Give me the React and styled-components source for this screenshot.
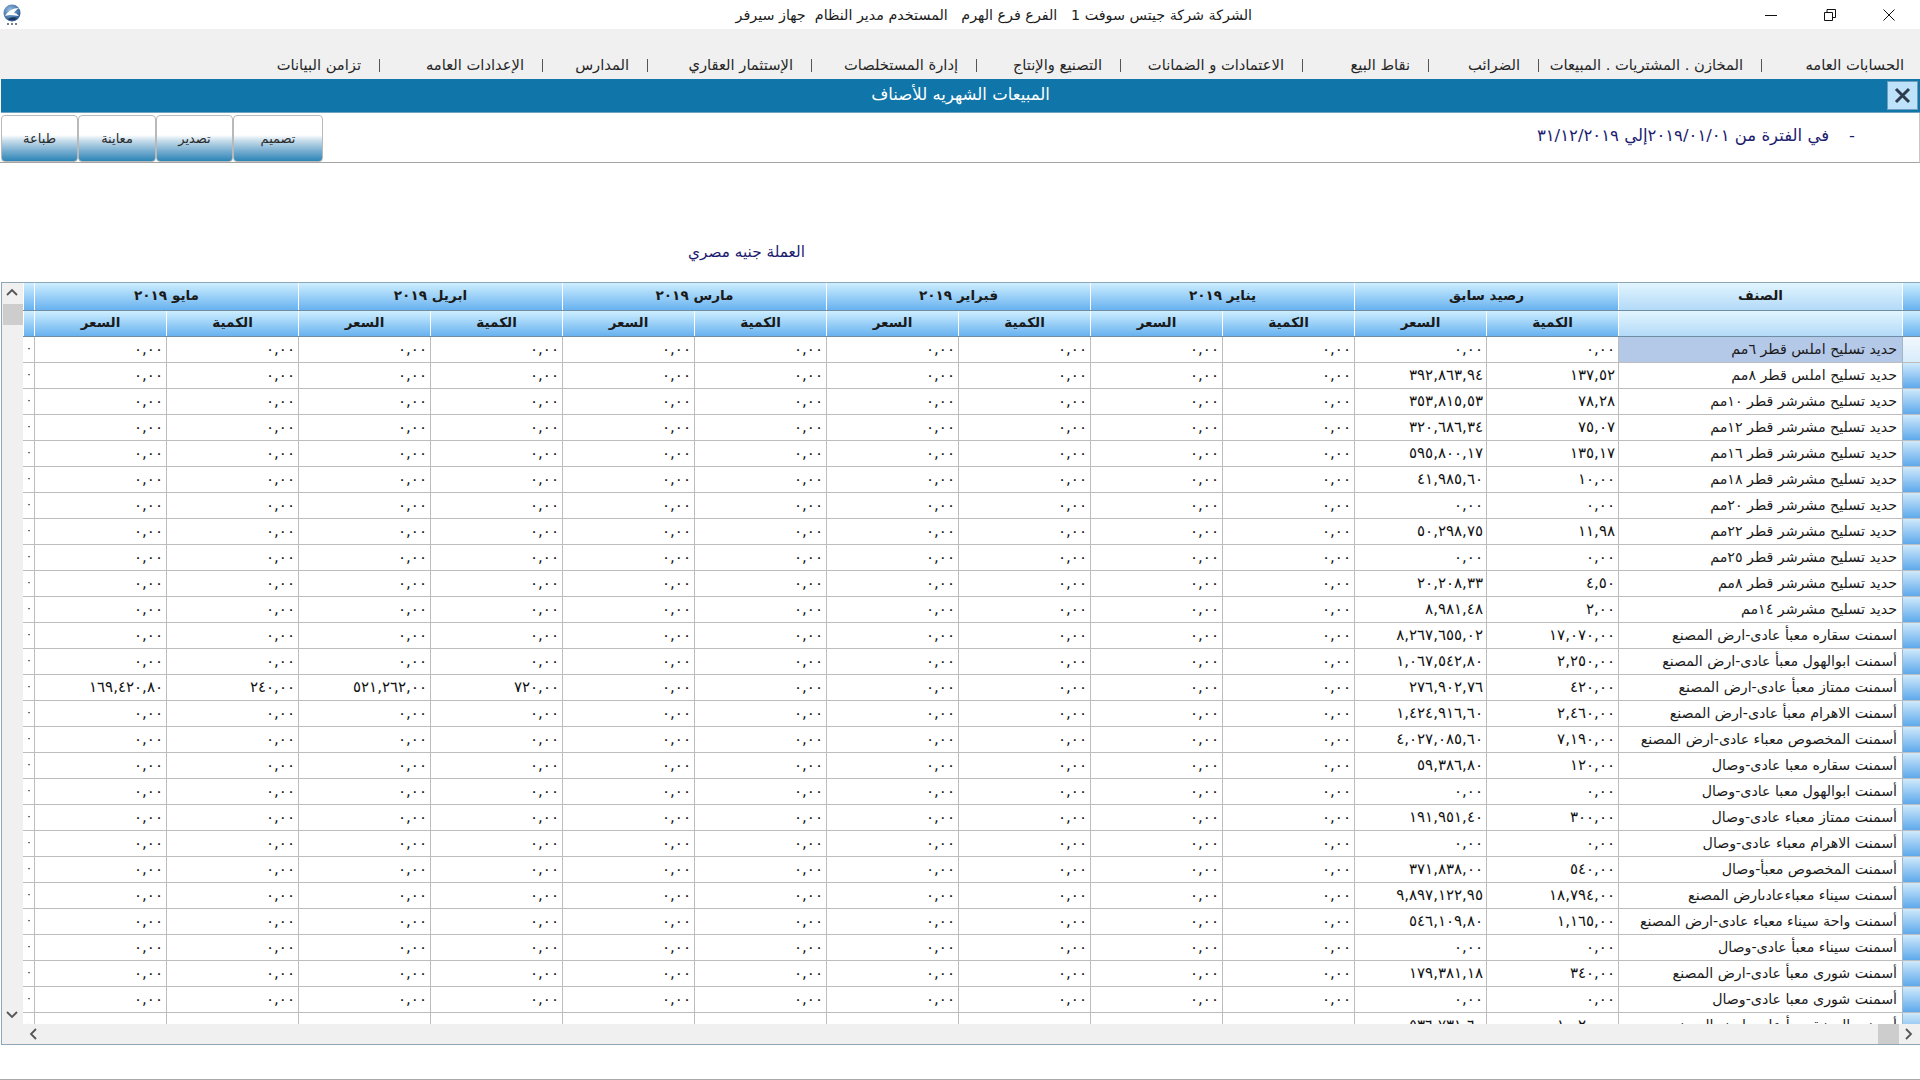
import React from 'react';
import styled, { createGlobalStyle } from 'styled-components';

const Global = createGlobalStyle`
  html, body { margin: 0; padding: 0; background: #fff; }
  * { box-sizing: border-box; }
  body { font-family: "DejaVu Sans", sans-serif; overflow: hidden; }
`;

const Page = styled.div`
  width: 1920px; height: 1080px; display: flex; flex-direction: column; overflow: hidden; background: #fff; color: #222;
`;
const TitleBar = styled.header`
  height: 29px; display: flex; align-items: center; background: #fff; flex: none;
`;
const Logo = styled.svg`
  width: 20px; height: 22px; margin: 0 0 0 2px; flex: none;
`;
const TitleText = styled.div`
  width: 1230px; text-align: right; font-size: 14.3px; color: #1c1c1c; white-space: pre; direction: rtl;
`;
const Controls = styled.div`
  margin-left: auto; margin-right: 2px; display: flex;
`;
const ControlButton = styled.button`
  width: 59px; height: 29px; border: 0; padding: 0; background: transparent; display: flex; align-items: center; justify-content: center; color: #111;
`;
const MenuBar = styled.nav`
  height: 50px; flex: none; background: #f0f0f0; display: flex; direction: rtl; align-items: flex-end; padding: 0 16px 3px 0;
`;
const MenuItem = styled.div`
  width: ${p => p.$w}px; flex: none; display: flex; justify-content: space-between; align-items: center; padding-left: 18px; font-size: 14.7px; line-height: 22px; color: #262626; white-space: nowrap;
`;
const MenuSep = styled.span`
  width: 1px; height: 13px; background: #555; flex: none;
`;
const ReportBar = styled.div`
  height: 34px; flex: none; margin-left: 1px; background: #1076a9; border-bottom: 1px solid #6fa4bf; display: flex; align-items: center; position: relative; justify-content: center; color: #fff; font-size: 16.5px; direction: rtl; padding-bottom: 2px;
`;
const ReportTitle = styled.div`
  line-height: 22px;
`;
const CloseButton = styled.button`
  position: absolute; right: 2px; top: 2px; width: 31px; height: 29px; background: #bfe2fb; border: 1px solid #6f9fbb; padding: 0; display: flex; align-items: center; justify-content: center;
`;
const ToolRow = styled.div`
  height: 50px; flex: none; display: flex; justify-content: space-between; align-items: flex-start; border-bottom: 1px solid #a3a3a3; border-right: 1px solid #c9c9c9; padding: 2px 0 0 1px;
`;
const ToolButtons = styled.div`
  display: flex;
`;
const ToolButton = styled.button`
  width: ${p => p.$w}px; height: 47px; border: 1px solid #b9b9b9; border-radius: 4px; padding: 0; font-family: inherit; font-size: 13px; color: #2b2b2b; direction: rtl;
  background: linear-gradient(to bottom, #fff 0, #fff 42%, #c6dcea 55%, #76add0 78%, #2c85b7 100%);
`;
const Period = styled.div`
  display: flex; direction: rtl; align-items: center; height: 40px; color: #1c1c70; font-size: 16.5px; padding-right: 58px; gap: 20px; margin-right: 6px;
`;
const CurrencyArea = styled.div`
  height: 119px; flex: none; padding: 78px 0 0 688px; color: #1c1c70; font-size: 15.3px; line-height: 22px; direction: ltr; text-align: left;
`;
const Frame = styled.section`
  flex: none; height: 763px; margin-left: 1px; border: 1px solid #8fa6b6; border-right-width: 0; display: flex; flex-direction: column; background: #f0f0f0;
`;
const GridArea = styled.div`
  display: flex; height: 741px; flex: none;
`;
const VScroll = styled.div`
  width: 21px; flex: none; position: relative; background: #f0f0f0; display: flex; flex-direction: column; align-items: center; justify-content: space-between;
`;
const VThumb = styled.div`
  position: absolute; left: 1px; right: 0; top: 21px; height: 21px; background: #cdcdcd;
`;
const ArrowBox = styled.div`
  height: ${p => p.$h}px; width: 100%; display: flex; align-items: center; justify-content: center; padding-right: 2px;
`;
const Viewport = styled.div`
  flex: 1; background: #fff; overflow: hidden; display: flex; flex-direction: column; direction: rtl;
`;
const HeadRow = styled.div`
  display: grid; grid-template-columns: 18px 284px repeat(${p => p.$count}, ${p => p.$cell}px) 10px; height: ${p => p.$h}px; flex: none; border-bottom: 1px solid #6f8da3;
`;
const HeadCell = styled.div`
  display: flex; align-items: center; justify-content: center; font-weight: bold; font-size: 13.6px; color: #1a1a1a; border-left: 1px solid #fff; padding-bottom: 4px;
  background: ${p => p.$light ? 'linear-gradient(to bottom, #e2f5fe, #b3daf8)' : 'linear-gradient(to bottom, #cdeeff, #68b2f0)'};
`;
const HeadEdge = styled(HeadCell)`
  border-left: 0;
`;
const Row = styled.div`
  display: grid; grid-template-columns: 18px 284px repeat(12, 132px) 10px; height: 26px; flex: none; border-bottom: 1px solid #bdbdbd;
`;
const RowHandle = styled.div`
  background: ${p => p.$active ? 'linear-gradient(to bottom, #f1f8fd, #d8ecfb)' : 'linear-gradient(to bottom, #cfe9fb, #5ea9ec)'};
  border-left: 1px solid #9fb7c9;
`;
const NameCell = styled.div`
  display: flex; align-items: center; padding: 0 5px 2px 0; font-size: 14.2px; color: #1a1a1a; white-space: nowrap; overflow: hidden; border-left: 1px solid #bdbdbd; background: ${p => p.$active ? '#b4c8e8' : 'transparent'};
`;
const ValueCell = styled.div`
  display: flex; align-items: center; direction: ltr; justify-content: flex-end; padding: 0 3px 2px 0; font-size: 15px; color: #111; white-space: nowrap; overflow: hidden; border-left: 1px solid #bdbdbd;
`;
const EdgeCell = styled(ValueCell)`
  border-left: 0; padding-right: 2px; font-size: 11px; overflow: visible;
`;
const HScroll = styled.div`
  height: 20px; flex: none; background: #f0f0f0; display: flex; align-items: center; justify-content: space-between; padding: 0 6px 0 26px; position: relative;
`;
const HThumb = styled.div`
  position: absolute; top: 0; bottom: 0; right: 21px; width: 21px; background: #cdcdcd;
`;
const BottomStrip = styled.footer`
  flex: 1; border-bottom: 1px solid #a8a8a8;
`;

const Z = '٠,٠٠';
const rows = [
  ['حديد تسليح املس قطر ٦مم', Z, Z],
  ['حديد تسليح املس قطر ٨مم', '١٣٧,٥٢', '٣٩٢,٨٦٣,٩٤'],
  ['حديد تسليح مشرشر قطر ١٠مم', '٧٨,٢٨', '٣٥٣,٨١٥,٥٣'],
  ['حديد تسليح مشرشر قطر ١٢مم', '٧٥,٠٧', '٣٢٠,٦٨٦,٣٤'],
  ['حديد تسليح مشرشر قطر ١٦مم', '١٣٥,١٧', '٥٩٥,٨٠٠,١٧'],
  ['حديد تسليح مشرشر قطر ١٨مم', '١٠,٠٠', '٤١,٩٨٥,٦٠'],
  ['حديد تسليح مشرشر قطر ٢٠مم', Z, Z],
  ['حديد تسليح مشرشر قطر ٢٢مم', '١١,٩٨', '٥٠,٢٩٨,٧٥'],
  ['حديد تسليح مشرشر قطر ٢٥مم', Z, Z],
  ['حديد تسليح مشرشر قطر ٨مم', '٤,٥٠', '٢٠,٢٠٨,٣٣'],
  ['حديد تسليح مشرشر ١٤مم', '٢,٠٠', '٨,٩٨١,٤٨'],
  ['اسمنت سقاره معبأ عادى-ارض المصنع', '١٧,٠٧٠,٠٠', '٨,٢٦٧,٦٥٥,٠٢'],
  ['أسمنت ابوالهول معبأ عادى-ارض المصنع', '٢,٢٥٠,٠٠', '١,٠٦٧,٥٤٢,٨٠'],
  ['أسمنت ممتاز معبأ عادى-ارض المصنع', '٤٢٠,٠٠', '٢٧٦,٩٠٢,٧٦'],
  ['أسمنت الاهرام معبأ عادى-ارض المصنع', '٢,٤٦٠,٠٠', '١,٤٢٤,٩١٦,٦٠'],
  ['أسمنت المخصوص معباء عادى-ارض المصنع', '٧,١٩٠,٠٠', '٤,٠٢٧,٠٨٥,٦٠'],
  ['أسمنت سقاره معبا عادى-وصال', '١٢٠,٠٠', '٥٩,٣٨٦,٨٠'],
  ['أسمنت ابوالهول معبا عادى-وصال', Z, Z],
  ['أسمنت ممتاز معباء عادى-وصال', '٣٠٠,٠٠', '١٩١,٩٥١,٤٠'],
  ['أسمنت الاهرام معباء عادى-وصال', Z, Z],
  ['أسمنت المخصوص معبأ-وصال', '٥٤٠,٠٠', '٣٧١,٨٣٨,٠٠'],
  ['أسمنت سيناء معباءعادىارض المصنع', '١٨,٧٩٤,٠٠', '٩,٨٩٧,١٢٢,٩٥'],
  ['أسمنت واحة سيناء معباء عادى-ارض المصنع', '١,١٦٥,٠٠', '٥٤٦,١٠٩,٨٠'],
  ['أسمنت سيناء معبأ عادى-وصال', Z, Z],
  ['أسمنت شورى معبأ عادى-ارض المصنع', '٣٤٠,٠٠', '١٧٩,٣٨١,١٨'],
  ['أسمنت شورى معبا عادى-وصال', Z, Z],
  ['أسمنت الجيزة معبأ عادى-ارض المصنع', '١,٠٢٠,٠٠', '٥٣٦,٧٣١,٦٠'],
];

const extras = { 13: { 8: '٧٢٠,٠٠', 9: '٥٢١,٢٦٢,٠٠', 10: '٢٤٠,٠٠', 11: '١٦٩,٤٢٠,٨٠' } };
const months = ['رصيد سابق', 'يناير ٢٠١٩', 'فبراير ٢٠١٩', 'مارس ٢٠١٩', 'ابريل ٢٠١٩', 'مايو ٢٠١٩'];
const menu = [
  ['الحسابات العامه', 161], ['المخازن . المشتريات . المبيعات', 223], ['الضرائب', 110], ['نقاط البيع', 126],
  ['الاعتمادات و الضمانات', 182], ['التصنيع والإنتاج', 144], ['إدارة المستخلصات', 165], ['الإستثمار العقاري', 164],
  ['المدارس', 105], ['الإعدادات العامه', 163],
];
const tools = [['طباعة', 77], ['معاينة', 78], ['تصدير', 77], ['تصميم', 90]];

const Chevron = ({ d }) => (
  <svg width="12" height="10" viewBox="0 0 12 10"><path d={d} fill="none" stroke="#555" strokeWidth="1.8" /></svg>
);

export default function App() {
  return (
    <Page>
      <Global />
      <TitleBar>
        <Logo viewBox="0 0 20 22">
          <defs>
            <radialGradient id="globe" cx="0.4" cy="0.35" r="0.7">
              <stop offset="0" stopColor="#9cc3e6" />
              <stop offset="1" stopColor="#1f4f8a" />
            </radialGradient>
          </defs>
          <circle cx="10" cy="9" r="8.5" fill="url(#globe)" />
          <path d="M3 12c3-5 8-8 14-8-3 2-4 3-5 5 2 0 3 1 5 3-4 0-7-2-14 0z" fill="#fff" />
          <path d="M6 15c3-2 6-2 9-1l-2 2H7z" fill="#1a3560" />
          <path d="M5 20h2M9 20h2M13 20h2" stroke="#456" strokeWidth="1.5" />
        </Logo>
        <TitleText>{'الشركة شركة جيتس سوفت 1   الفرع فرع الهرم   المستخدم مدير النظام  جهاز سيرفر'}</TitleText>
        <Controls>
          <ControlButton aria-label="minimize">
            <svg width="12" height="12" viewBox="0 0 12 12"><path d="M0 6.500h12" stroke="#111" /></svg>
          </ControlButton>
          <ControlButton aria-label="restore">
            <svg width="12" height="12" viewBox="0 0 12 12"><path d="M.5 3.500h8v8h-8zM3 3.500V.5h8.500v8H8.500" fill="none" stroke="#111" /></svg>
          </ControlButton>
          <ControlButton aria-label="close">
            <svg width="12" height="12" viewBox="0 0 12 12"><path d="M.5.500l11 11M11.500.500l-11 11" stroke="#111" /></svg>
          </ControlButton>
        </Controls>
      </TitleBar>
      <MenuBar>
        {menu.map(([label, w]) => (
          <MenuItem key={label} $w={w}><span>{label}</span><MenuSep /></MenuItem>
        ))}
        <MenuItem $w={100}><span>تزامن البيانات</span></MenuItem>
      </MenuBar>
      <ReportBar>
        <ReportTitle>المبيعات الشهريه للأصناف</ReportTitle>
        <CloseButton aria-label="close report">
          <svg width="17" height="17" viewBox="0 0 17 17"><path d="M2 2l13 13M15 2L2 15" stroke="#2e3c4c" strokeWidth="3" /></svg>
        </CloseButton>
      </ReportBar>
      <ToolRow>
        <ToolButtons>
          {tools.map(([label, w]) => <ToolButton key={label} $w={w}>{label}</ToolButton>)}
        </ToolButtons>
        <Period>
          <span>-</span>
          <span>في الفترة من ٢٠١٩/٠١/٠١إلي ٣١/١٢/٢٠١٩</span>
        </Period>
      </ToolRow>
      <CurrencyArea dir="rtl">العملة جنيه مصري</CurrencyArea>
      <Frame>
        <GridArea>
          <VScroll>
            <ArrowBox $h={20}><Chevron d="M1 7l5-5 5 5" /></ArrowBox>
            <VThumb />
            <ArrowBox $h={20}><Chevron d="M1 3l5 5 5-5" /></ArrowBox>
          </VScroll>
          <Viewport>
            <HeadRow $h={28} $count={6} $cell={264}>
              <HeadCell />
              <HeadCell $light>الصنف</HeadCell>
              {months.map(m => <HeadCell key={m}>{m}</HeadCell>)}
              <HeadEdge />
            </HeadRow>
            <HeadRow $h={26} $count={12} $cell={132}>
              <HeadCell />
              <HeadCell $light />
              {months.flatMap(m => [
                <HeadCell key={m + 'q'}>الكمية</HeadCell>,
                <HeadCell key={m + 'p'}>السعر</HeadCell>,
              ])}
              <HeadEdge />
            </HeadRow>
            {rows.map(([name, qty, price], i) => (
              <Row key={name}>
                <RowHandle $active={i === 0} />
                <NameCell $active={i === 0}>{name}</NameCell>
                <ValueCell>{qty}</ValueCell>
                <ValueCell>{price}</ValueCell>
                {Array.from({ length: 10 }, (_, c) => (
                  <ValueCell key={c}>{(extras[i] && extras[i][c + 2]) || Z}</ValueCell>
                ))}
                <EdgeCell>٠</EdgeCell>
              </Row>
            ))}
          </Viewport>
        </GridArea>
        <HScroll>
          <svg width="10" height="14" viewBox="0 0 10 14"><path d="M8 2L3 7l5 5" fill="none" stroke="#555" strokeWidth="1.8" /></svg>
          <HThumb />
          <svg width="10" height="14" viewBox="0 0 10 14"><path d="M2 2l5 5-5 5" fill="none" stroke="#555" strokeWidth="1.8" /></svg>
        </HScroll>
      </Frame>
      <BottomStrip />
    </Page>
  );
}
